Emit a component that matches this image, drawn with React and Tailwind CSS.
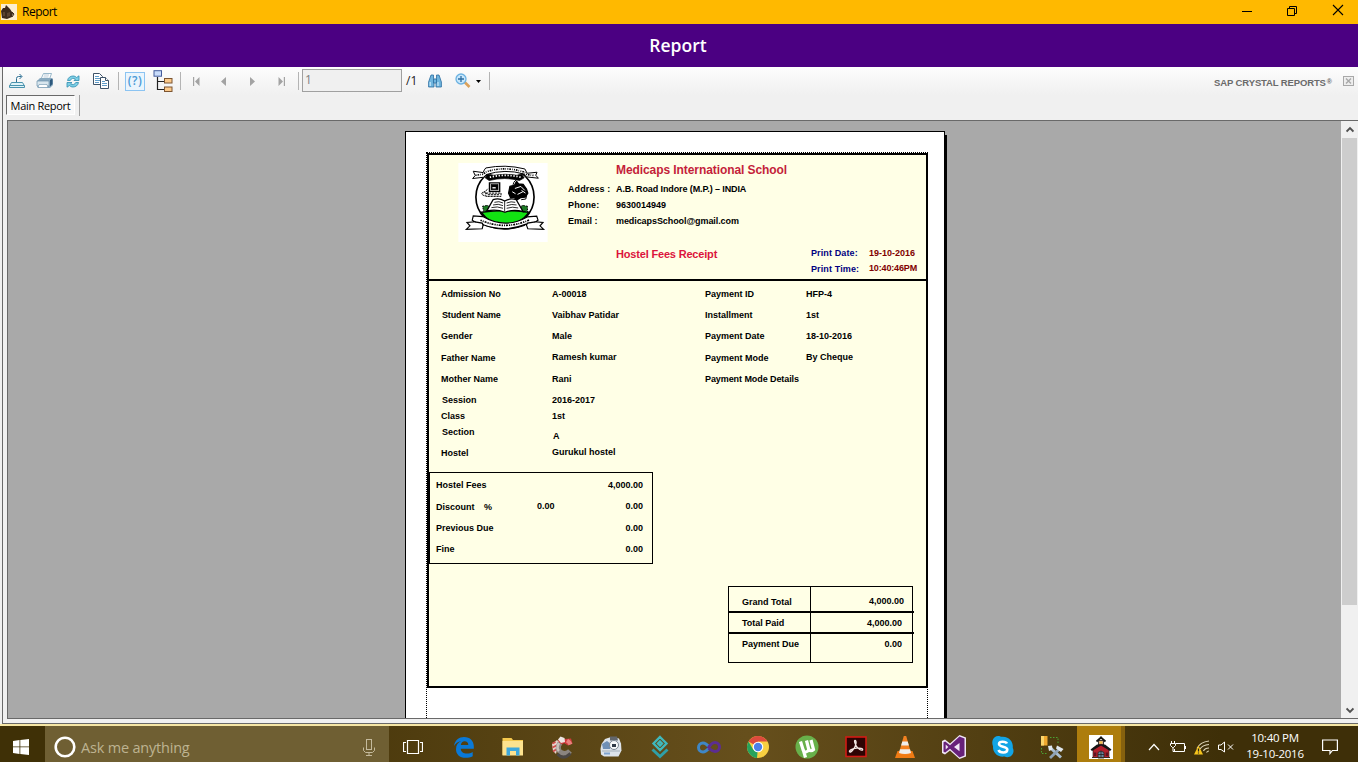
import React from "react";

const cell = "flex shrink-0 items-center justify-center h-full";

/* ---------- title bar ---------- */
function TitleBar() {
  return (
    <div className="flex h-6 shrink-0 items-center bg-[#ffb900] text-black">
      <svg className="ml-px h-4 w-4" viewBox="0 0 16 16">
        <rect width="16" height="16" fill="#fbeed2" />
        <path d="M0 7 L2 4 L4 4 L5 1 L9 5 L11 8 L12 9 L11 13 L6 15 L1 14 Z" fill="#3c2a1c" />
        <path d="M2 8h2v4h-2zM6 9l3-1v4l-3 1z" fill="#5b4330" />
        <path d="M11 8l2 2-2 3" stroke="#3c2a1c" fill="none" />
      </svg>
      <span className="ml-[5px] text-[12px] leading-6 tracking-[-0.5px]">Report</span>
      <div className="ml-auto flex h-full items-center">
        <svg className="mb-[3px] h-3 w-3 mr-[33px]" viewBox="0 0 12 12"><path d="M1 6.500h10" stroke="#000" /></svg>
        <svg className="mb-[3px] h-3 w-3 mr-[34px]" viewBox="0 0 12 12" fill="none" stroke="#000"><path d="M1.500 3.500h7v7h-7zM3.500 3.500v-2h7v7h-2" /></svg>
        <svg className="mb-[5px] h-3 w-3 mr-[14px]" viewBox="0 0 12 12"><path d="M1 1l10 10M11 1L1 11" stroke="#000" strokeWidth="1.1" /></svg>
      </div>
    </div>
  );
}

/* ---------- toolbar ---------- */
const Sep = () => <div className="h-[18px] w-px bg-[#b4b4b4]" />;

function Toolbar() {
  return (
    <div className="flex h-7 shrink-0 items-center bg-linear-to-b from-[#fdfdfd] to-[#f0f0f0]">
      <div className={`${cell} w-7`}>
        <svg className="h-4 w-[18px]" viewBox="0 0 18 16" fill="none" stroke="#4a93ad">
          <path d="M3.500 9.500h11l2 3.500v1.500h-15V13z" fill="#dff3f8" stroke="none" />
          <path d="M7 9.500H3.500L1.500 13v1.500h15V13l-2-3.500H11M1.500 12.500h15" />
          <path d="M6 9.500h6" />
          <path d="M8.500 9V5.500q0-2 2-2h3M11.500 1l2.500 2.500L11.500 6" stroke="#2c6f93" />
        </svg>
      </div>
      <div className={`${cell} w-7`}>
        <svg className="h-4 w-[18px]" viewBox="0 0 18 16">
          <path d="M5 6L7.500.5h8L13.500 6z" fill="#fff" stroke="#7fa6bd" strokeWidth=".8" />
          <path d="M8 2h5M7.500 4h5" stroke="#9bb6c8" strokeWidth=".7" />
          <path d="M1 8l3-3h12l1 2v5l-3 3H2l-1-2z" fill="#8aaac0" />
          <path d="M1 8h12v5H1z" fill="#d9e6ee" stroke="#6f93ac" strokeWidth=".7" />
          <path d="M3 11.500h8l1 3H2z" fill="#fff" stroke="#6f93ac" strokeWidth=".6" />
          <path d="M14 7l2.500-1.500V11L14 13.500z" fill="#2d587c" />
        </svg>
      </div>
      <div className={`${cell} w-[27px]`}>
        <svg className="h-[13px] w-[14px]" viewBox="0 0 14 13" fill="#7fd0e6" stroke="#2f8db0" strokeWidth=".8">
          <path d="M1.500 5.500C2 2.500 4.500 1 7 1c1.500 0 2.700.6 3.600 1.500L13 .8V5.500H8l1.400-1.400C7.700 2.800 5 3.200 4.300 5.500z" />
          <path d="M12.500 7.500C12 10.500 9.500 12 7 12c-1.500 0-2.700-.6-3.600-1.500L1 12.200V7.500h5L4.600 8.900C6.300 10.200 9 9.800 9.700 7.500z" />
        </svg>
      </div>
      <div className={`${cell} w-[30px]`}>
        <svg className="h-[18px] w-[18px]" viewBox="0 0 18 18" fill="#fff" stroke="#3e5368">
          <path d="M1.500 1.500h6l3 3v8h-9z" />
          <path d="M3 4.500h4M3 6.500h5M3 8.500h5M3 10.500h4" stroke="#5f9cc9" />
          <path d="M8.500 5.500h5l3 3v8h-8z" />
          <path d="M13.500 5.500v3h3" />
          <path d="M10 9.500h3M10 11.500h5M10 13.500h5" stroke="#5f9cc9" />
        </svg>
      </div>
      <div className={`${cell} w-[5px]`}><Sep /></div>
      <div className={`${cell} w-7`}>
        <div className="flex h-[19px] w-5 items-center justify-center border border-[#8cc4f2] bg-[#eaf5fd]">
          <span className="text-[12px] leading-none font-semibold tracking-[0.4px] text-[#4a9ad6]">(?)</span>
        </div>
      </div>
      <div className={`${cell} w-7`}>
        <svg className="h-[22px] w-5" viewBox="0 0 20 22" fill="none">
          <path d="M4.500 7v12.500h7M4.500 11.500h7" stroke="#222" strokeWidth="1.200" />
          <rect x="1" y=".7" width="7.500" height="5.500" fill="#c9dcfa" stroke="#445c9c" />
          <rect x="11.500" y="8.500" width="7.500" height="4.500" fill="#fbc98a" stroke="#7c5430" />
          <rect x="11.500" y="17" width="7.500" height="4.500" fill="#fbc98a" stroke="#7c5430" />
        </svg>
      </div>
      <div className={`${cell} w-1.5`}><Sep /></div>
      <div className={`${cell} w-[26px]`}>
        <svg className="h-[9px] w-[7px]" viewBox="0 0 7 9" fill="#a3a3a3"><path d="M0 0h1.200v9H0zM6.500 0v9L2 4.500z" /></svg>
      </div>
      <div className={`${cell} w-[28px]`}>
        <svg className="h-[9px] w-[5px]" viewBox="0 0 5 9" fill="#a3a3a3"><path d="M5 0v9L0 4.500z" /></svg>
      </div>
      <div className={`${cell} w-[31px]`}>
        <svg className="h-[9px] w-[5px]" viewBox="0 0 5 9" fill="#a3a3a3"><path d="M0 0v9l5-4.500z" /></svg>
      </div>
      <div className={`${cell} w-[26px]`}>
        <svg className="h-[9px] w-[7px]" viewBox="0 0 7 9" fill="#a3a3a3"><path d="M5.800 0H7v9H5.800zM.5 0v9L5 4.500z" /></svg>
      </div>
      <div className={`${cell} w-2`}><Sep /></div>
      <div className="mb-px flex h-[23px] w-[100px] shrink-0 items-center border border-[#a0a0a0] bg-[#f0f0f0] pb-px pl-[2px] text-[12px] text-[#808080]">1</div>
      <span className="w-[21px] shrink-0 pl-1 text-[12px] leading-none text-[#222]">/1</span>
      <div className={`${cell} w-6`}>
        <svg className="h-[14px] w-[14px]" viewBox="0 0 14 14" fill="#6fb5de" stroke="#2b6c9f" strokeWidth=".8">
          <path d="M3 1h2.500v3L6 6v7H.6V8z" />
          <path d="M11 1H8.500v3L8 6v7h5.400V8z" />
          <path d="M5.500 5h3v4h-3z" />
          <path d="M2.200 8v4M10 8v4" stroke="#c7e8fa" strokeWidth="1.200" />
        </svg>
      </div>
      <div className={`${cell} w-[31px] pb-0.5`}>
        <svg className="h-[15px] w-4" viewBox="0 0 16 15">
          <path d="M9.500 9l5 5" stroke="#dba25c" strokeWidth="2.600" />
          <circle cx="6" cy="6" r="5" fill="#c8e7fb" stroke="#6cb2e2" strokeWidth="1.300" />
          <path d="M3 6h6M6 3v6" stroke="#2d6ea3" strokeWidth="1.300" />
        </svg>
      </div>
      <svg className="-ml-0.5 h-[3px] w-[5px]" viewBox="0 0 5 3"><path d="M0 0h5L2.500 3z" /></svg>
      <div className="ml-2"><Sep /></div>
      <div className="ml-auto flex items-center">
        <span className="mt-[3px] font-['Liberation_Sans',Arial,sans-serif] text-[9.500px] leading-none font-bold tracking-[-0.13px] text-[#6a6a6a]">SAP CRYSTAL REPORTS</span>
        <span className="mr-[11px] ml-px font-['Liberation_Sans',Arial,sans-serif] text-[7px] leading-none font-bold text-[#666]">®</span>
        <svg className="mr-1 h-[11px] w-[11px]" viewBox="0 0 11 11" fill="none" stroke="#a8a8a8">
          <rect x=".5" y=".5" width="10" height="9" fill="#eee" />
          <path d="M3 2.500l5 5M8 2.500l-5 5" strokeWidth="1.400" />
        </svg>
      </div>
    </div>
  );
}

function Tabs() {
  return (
    <div className="flex h-[25px] shrink-0 items-start bg-[#f0f0f0] pl-0.5">
      <div className="ml-px flex h-5 w-[69px] items-center justify-center border border-t-[#696969] border-r-white border-b-white border-l-[#696969] bg-[#f8f8f8] pt-0.5 text-[11px] tracking-[-0.3px] whitespace-nowrap text-black">
        Main Report
      </div>
      <div className="ml-1 h-[21px] w-px bg-[#a0a0a0]" />
    </div>
  );
}

/* ---------- report page ---------- */
function Emblem() {
  return (
    <svg className="h-[79px] w-[90px]" viewBox="159 113 270 239" fill="none" stroke="#000" strokeWidth="4">
      <rect x="159" y="113" width="270" height="239" fill="#fff" stroke="none" />
      <circle cx="300" cy="216" r="88" fill="#fff" strokeWidth="5" />
      <path d="M228 262Q300 252 373 262Q345 300 300 300Q255 300 228 262z" fill="#12e312" stroke="#000" />
      <path d="M236 254h130" strokeWidth="5" />
      <path d="M243 286Q300 312 358 286" strokeWidth="3" />
      <path d="M232 244l16-3 10 16-22 3zM368 244l-16-3-8 16 24 4z" fill="#1d7a24" strokeWidth="3" strokeDasharray="5 3" />
      {/* open book */}
      <path d="M245 258L264 224Q282 218 299 228Q316 218 334 224L355 260Q325 252 300 262Q275 252 245 258z" fill="#fff" />
      <path d="M299 228v32M268 232q14-5 26 2M264 240q16-5 30 2M259 248q18-5 35 2M305 234q14-6 26-2M305 242q16-6 30-2M305 250q18-6 35-1" strokeWidth="2.500" />
      {/* computer */}
      <path d="M253 173h31v26h-31z" fill="#fff" strokeWidth="4" />
      <rect x="258" y="178" width="21" height="16" fill="#000" strokeWidth="2" />
      <path d="M262 188h10" stroke="#fff" strokeWidth="4" />
      <path d="M242 204h46v10h-46zM238 212q-12-4-6-10 8-5 12 4M235 203l14-12M248 209h34" strokeWidth="3" strokeDasharray="7 2" />
      {/* globe and hand */}
      <path d="M315 184l14-4 6-12 6 8 14 2 10 14 4 12-8 12-14 2-10 6-12-8-8 2-6-14z" fill="#000" />
      <path d="M330 190l18-6 12 12M338 208l16-8M324 180q2-14 14-16M350 196l12 8M322 200l10 6" stroke="#fff" strokeWidth="3" />
      <path d="M325 184q-2-14 10-20M352 210l14-2-3 14-14 2" strokeWidth="3" />
      {/* upper ribbon */}
      <path d="M240 158l8-12 18 4q34-6 70 0l14-4 8 12-14 8q-44-12-92 0z" fill="#000" strokeWidth="2" />
      <path d="M254 156Q300 145 348 156" stroke="#fff" strokeWidth="5" strokeDasharray="4 5" />
      <path d="M204 138l30 4q3-9 8-14Q300 116 360 131l7 13 30-3-4 9 8 9-36-4-8-9Q300 130 243 148l-7 8-34 4 8-9z" fill="#fff" strokeWidth="3" />
      <path d="M211 150l23-3 10-8Q300 122 357 140l9 8 23 3" strokeWidth="5" strokeDasharray="3 3 5 3 2 4" />
      {/* lower ribbon */}
      <path d="M234 280q65 40 132 0l-8 22q-58 22-116 0z" fill="#000" />
      <path d="M204 273l-3 13 8 5-24 2 9 10-11 11 48-2 3-12Q300 324 364 298l5 14 48 2-11-11 9-10-23-2 8-5-4-12-29 2Q300 314 233 275z" fill="#fff" strokeWidth="3.500" />
      <path d="M209 291l22 4 4 7M392 291l-24 4-4 7" strokeWidth="4" />
      <path d="M226 286Q300 318 374 285" strokeWidth="5" strokeDasharray="4 3 3 3 6 3" />
    </svg>
  );
}

/* A column of fields; every entry carries the distance to the next one. */
function Column({ items, className }) {
  return (
    <div className={`flex flex-col ${className}`}>
      {items.map(([text, h, t]) => (
        <div key={text} className={`${h} ${t || ""} shrink-0`}>{text}</div>
      ))}
    </div>
  );
}

const leftLabels = [
  ["Admission No", "h-[21px]", "tracking-[-0.08px]"], ["Student Name", "h-[21px]", "pl-px tracking-[-0.15px]"], ["Gender", "h-[22px]"],
  ["Father Name", "h-[21px]"], ["Mother Name", "h-[21px]"], ["Session", "h-4", "pl-px"],
  ["Class", "h-4"], ["Section", "h-[21px]", "pl-px"], ["Hostel", "h-3"],
];
const leftValues = [
  ["A-00018", "h-[21px]"], ["Vaibhav Patidar", "h-[21px]"], ["Male", "h-[21px]"],
  ["Ramesh kumar", "h-[22px]"], ["Rani", "h-[21px]"], ["2016-2017", "h-4"],
  ["1st", "h-5"], ["A", "h-4", "pl-px"], ["Gurukul hostel", "h-3"],
];
const rightLabels = [
  ["Payment ID", "h-[21px]"], ["Installment", "h-[21px]"], ["Payment Date", "h-[22px]"],
  ["Payment Mode", "h-[21px]"], ["Payment Mode Details", "h-3", "tracking-[-0.08px]"],
];
const rightValues = [["HFP-4", "h-[21px]"], ["1st", "h-[21px]"], ["18-10-2016", "h-[21px]"], ["By Cheque", "h-3"]];

function ReportHeader() {
  return (
    <div className="flex h-[126px] shrink-0 border-b-2 border-black">
      <div className="mt-2 ml-[29px] w-[110px] shrink-0"><Emblem /></div>
      <div className="w-[243px] shrink-0">
        <div className="mt-2 ml-12 text-[12px] leading-[14px] tracking-[-0.08px] whitespace-nowrap text-[#c41e3a]">Medicaps International School</div>
        <div className="mt-[6px] flex h-4"><span className="w-12 tracking-[0.1px]">Address :</span><span className="tracking-[-0.1px] whitespace-nowrap">A.B. Road Indore (M.P.) – INDIA</span></div>
        <div className="flex h-4"><span className="w-12 tracking-[0.15px]">Phone:</span><span>9630014949</span></div>
        <div className="flex h-4"><span className="w-12">Email :</span><span className="tracking-[-0.08px]">medicapsSchool@gmail.com</span></div>
        <div className="mt-4 ml-12 text-[11px] leading-[14px] tracking-[-0.18px] whitespace-nowrap text-[#dc143c]">Hostel Fees Receipt</div>
      </div>
      <div className="mt-[92px] text-[#000080]">
        <div className="flex h-4"><span className="w-[58px] tracking-[0.12px]">Print Date:</span><span className="text-[#800000]">19-10-2016</span></div>
        <div className="flex h-4"><span className="w-[58px] tracking-[0.12px]">Print Time:</span><span className="-mt-px tracking-[-0.15px] text-[#800000]">10:40:46PM</span></div>
      </div>
    </div>
  );
}

function FeesBox() {
  return (
    <div className="mt-[14px] h-[92px] w-[224px] shrink-0 border border-black pt-1.5 pr-[9px] pl-1.5">
      <div className="flex h-[21px] justify-between"><span>Hostel Fees</span><span>4,000.00</span></div>
      <div className="flex h-[22px]">
        <span className="mt-px w-12">Discount</span><span className="mt-px w-[53px]">%</span><span>0.00</span>
        <span className="ml-auto">0.00</span>
      </div>
      <div className="flex h-[21px] justify-between"><span>Previous Due</span><span>0.00</span></div>
      <div className="flex h-[21px] justify-between"><span>Fine</span><span>0.00</span></div>
    </div>
  );
}

function TotalsBox() {
  return (
    <div className="mt-[22px] ml-[299px] w-[185px] shrink-0 border border-black">
      <div className="flex h-[26px] w-[185px] border-b-2 border-black">
        <span className="w-[82px] border-r border-black pt-[9px] pl-[13px]">Grand Total</span>
        <span className="ml-auto pt-2 pr-[10px]">4,000.00</span>
      </div>
      <div className="flex h-[21px] w-[185px] border-b-2 border-black">
        <span className="w-[82px] border-r border-black pt-1 pl-[13px]">Total Paid</span>
        <span className="ml-auto pt-1 pr-3">4,000.00</span>
      </div>
      <div className="flex h-7 w-[185px]">
        <span className="w-[82px] border-r border-black pt-1 pl-[13px]">Payment Due</span>
        <span className="ml-auto pt-1 pr-3">0.00</span>
      </div>
    </div>
  );
}

function ReportPage() {
  return (
    <div className="mt-[10px] ml-[397px] h-[700px] w-[540px] shrink-0 border border-black bg-white pt-5 pl-5 shadow-[2px_4px_0_#000]">
      <div className="h-[700px] w-[502px] border border-dotted border-black font-['Liberation_Sans',Arial,sans-serif] text-[9px] leading-3 font-bold text-black">
        <div className="flex h-[535px] w-[501px] flex-col border-2 border-black bg-[#ffffe6]">
          <ReportHeader />
          <div className="flex h-[177px] shrink-0 pt-[7px] pl-3">
            <Column items={leftLabels} className="w-[111px]" />
            <Column items={leftValues} className="w-[153px]" />
            <Column items={rightLabels} className="w-[101px] whitespace-nowrap" />
            <Column items={rightValues} className="whitespace-nowrap" />
          </div>
          <FeesBox />
          <TotalsBox />
        </div>
      </div>
    </div>
  );
}

function Viewer() {
  return (
    <div className="ml-1 flex h-[599px] shrink-0 overflow-hidden border border-r-0 border-[#696969] bg-[#a9a9a9]">
      <div className="flex min-w-0 grow overflow-hidden"><ReportPage /></div>
      <div className="flex w-[17px] shrink-0 flex-col items-center bg-[#f0f0f0]">
        <div className="flex h-[17px] items-center">
          <svg className="h-2 w-2" viewBox="0 0 8 8" fill="none" stroke="#505050" strokeWidth="1.800"><path d="M.6 5.500L4 2l3.400 3.500" /></svg>
        </div>
        <div className="h-[467px] w-[15px] bg-[#cdcdcd]" />
        <div className="mt-auto flex h-[17px] items-center">
          <svg className="h-2 w-2" viewBox="0 0 8 8" fill="none" stroke="#505050" strokeWidth="1.800"><path d="M.6 2.500L4 6l3.400-3.500" /></svg>
        </div>
      </div>
    </div>
  );
}

/* ---------- taskbar ---------- */
const I = ({ children }) => <svg className="h-6 w-6" viewBox="0 0 24 24">{children}</svg>;

const apps = [
  <I key="edge">
    <path d="M2 11C3 4.800 7 2 12 2c6.300 0 9.800 4.300 9.800 9.300v2.400H8.700c.3 3.400 3.100 4.800 6.100 4.800 2.300 0 4.200-.6 5.900-1.600v4.300c-2 1.200-4.500 1.600-7 1.600-6.200 0-9.700-3.700-9.700-8.600 0-4 2.200-6.700 5.300-8.100C6 6.600 3.500 8.500 2 11zM8.800 10h7.500C16.300 7.500 14.900 6.300 12.600 6.300 10.500 6.300 9.200 7.700 8.800 10z" fill="#0a79d7" />
  </I>,
  <I key="explorer">
    <path d="M1.500 3h9l1.500 2h10v15h-20.500z" fill="#f5c94e" />
    <path d="M1.500 6h20.500v14.500H1.500z" fill="#fde38f" />
    <path d="M5.500 12.500h13v8H15v-4.500H9v4.500H5.500z" fill="#3ea8dc" />
  </I>,
  <I key="cleaner">
    <path d="M8 5l3-3 4 2 6-.5 1.500 5-4.500 2-4-2.500-5 4z" fill="#d0393c" />
    <path d="M8 4.500l2.500-3 4 1.500.5 4-4 1z" fill="#ece6e2" />
    <path d="M2 9l5-4 2 2-3 12-3-3z" fill="#e9d0cb" />
    <path d="M2.500 8.500l3-1.500M2.500 12.500l4-2M3 16.500l3-2" stroke="#cf4a48" strokeWidth="1.600" />
    <path d="M17 5.500q2.500 1.500 3.500 4" fill="none" stroke="#e8807c" strokeWidth="4" />
    <path d="M10 8q-4 6 1 9.500 5 3 9-1.500" fill="none" stroke="#8a847f" strokeWidth="5" />
    <path d="M7.500 19q4 4.500 9 2.500l4-3" fill="none" stroke="#4b4744" strokeWidth="3" />
    <path d="M9 8q-3 5 0 8" fill="none" stroke="#c9c2bc" strokeWidth="2.500" />
  </I>,
  <I key="machine">
    <path d="M1.500 14l1-5L6 4l6-2 8 1.500 2 5 .5 7-3 6H5l-3-2z" fill="#dde3ea" />
    <path d="M11 1.500h7l1 4h-8z" fill="#62666c" />
    <path d="M3 9l5-3 4 3-1 5H4z" fill="#6f8fb5" />
    <circle cx="15" cy="10" r="4.500" fill="#f7f9fb" stroke="#7b8794" />
    <path d="M3 16h18" stroke="#a3afba" /><path d="M5 18.500h6" stroke="#7fa3cf" strokeWidth="2" />
    <path d="M13 9h4v3h-4z" fill="#2f3a48" />
  </I>,
  <I key="blocks">
    <path d="M12 2l6.500 6.500L12 15 5.500 8.500zM12 6.500l2 2-2 2-2-2z" fill="none" stroke="#3fb9bd" strokeWidth="2.300" />
    <path d="M4.500 14.500l7.500 7 7.500-7" fill="none" stroke="#2fa0a8" strokeWidth="3" />
  </I>,
  <I key="infinity">
    <path d="M12.500 12.500c-2.500 3-4 4.500-6.500 4.500s-4.500-2-4.500-4.500S3.500 8 6 8s4.500 2 6.500 4.500" fill="none" stroke="#3f87c6" strokeWidth="3" />
    <path d="M11 13.500c2-3.500 4.200-6 7-6 2.500 0 4.500 2 4.500 4.500S20.500 16.500 18 16.500s-4.500-2-6.500-3.500" fill="none" stroke="#5c2d91" strokeWidth="3" />
  </I>,
  <I key="chrome">
    <circle cx="12" cy="12" r="11" fill="#f7cf40" />
    <path d="M12 12L2.500 6.500A11 11 0 0 1 21.500 6.500H12z" fill="#dc4a3d" />
    <path d="M12 12l-1 11A11 11 0 0 1 2.500 6.500L7.300 14.700z" fill="#27a25c" />
    <circle cx="12" cy="12" r="5.300" fill="#fff" />
    <circle cx="12" cy="12" r="4.200" fill="#4a80e8" />
  </I>,
  <I key="torrent">
    <circle cx="12" cy="12" r="11.500" fill="#68b04a" />
    <path d="M5.500 6.500l2.800 9c.8 2.300 4.500 2 5.500-1L11.500 5.500M13.800 14c1 2.500 3.200 2 4.700.5L16 5M8.300 15l2.200 7.500" fill="none" stroke="#fff" strokeWidth="3.200" />
  </I>,
  <I key="reader">
    <rect x="2" y="2" width="20" height="19.500" fill="#2d0404" stroke="#d11b14" strokeWidth="1.600" />
    <path d="M11 5.500c2 0 1 5-1 8-2 3.200-4 4-4.500 3.200-.6-1.200 3-3 7-3.500s6.500.2 6.200 1.500c-.5 1.400-5-.6-6.700-4.200-1.200-2.500-2-5-1-5z" fill="none" stroke="#f5e8e4" strokeWidth="1.300" />
  </I>,
  <I key="player">
    <path d="M4.500 16h15l2.500 7H2z" fill="#ef7b14" />
    <path d="M10.800 1h2.400l5 17.500q-6.200 2.500-12.400 0z" fill="#f38120" />
    <path d="M9.300 6.500h5.400l1.200 4H8.100zM7 14.300h10l1 3.600q-6 2-12 0z" fill="#eee" />
  </I>,
  <I key="studio">
    <path d="M17.500 0L24 2.500v19L17.500 24 8 15.500 3 19.500 0 18V6l3-1.500L8 8.500z" fill="#f0e6f5" />
    <path d="M17.500 1.500L22.500 3.500v17l-5 2L8 13.700 3.200 17.600 1.500 16.700V7.300l1.700-.9L8 10.300zM17.500 8L12 12l5.500 4.200zM3.700 9.500v5L6.300 12z" fill="#67217a" fillRule="evenodd" />
  </I>,
  <I key="skype">
    <path d="M7 1c2 0 3 .8 4 .8 7-.5 11.500 5 10.800 11.200 1.500 3 .6 6-1.500 7.700-2 1.700-4.500 1.800-6.800.8C6.500 22.500 1.500 17.500 2 11.200 0 6 2.500 1.200 7 1z" fill="#12a5e6" />
    <path d="M16 8.500C15 6.500 8 5.500 8 9c0 3.500 8.300 1.800 8.300 5.500 0 4-7.500 3.700-8.800.5" fill="none" stroke="#fff" strokeWidth="2.600" />
  </I>,
  <I key="tools">
    <path d="M1 1h6.500v9.500H1z" fill="#f0a92f" /><path d="M1 1h3v9.500H1z" fill="#fbd56c" />
    <path d="M10 2.500h8v7M1.500 13v5.500h6" fill="none" stroke="#4aa334" strokeDasharray="1.500 1.500" />
    <path d="M10 12.500l11 10" stroke="#a9bed0" strokeWidth="3" /><path d="M20 13.500L10 23" stroke="#8fa3b5" strokeWidth="2.800" />
    <path d="M17 10.500l6.500 3.500-2.500 3-5-3.500zM8 11l4-.5.500 4-3.500 1.500z" fill="#dfe7ee" />
  </I>,
];

function School() {
  return (
    <svg className="h-6 w-6" viewBox="0 0 24 24">
      <rect width="24" height="24" fill="#fff" />
      <path d="M9.500 5.500h5V10h-5z" fill="#d9a87c" stroke="#111" strokeWidth=".8" />
      <path d="M7.500 6.500L12 2.500l4.500 4M12 1.500v2" stroke="#111" strokeWidth="1.800" fill="none" />
      <path d="M4 13.500l8-4.500 8 4.500v9H4z" fill="#b3202c" stroke="#111" strokeWidth=".6" />
      <path d="M1.500 14.500L8 9.500h8l6.500 5-1.500 1.500L12 10.500 3 16z" fill="#151515" />
      <circle cx="12" cy="7.500" r="1.200" fill="#f2c14c" />
      <path d="M9 23v-5.500q3-3 6 0V23z" fill="#6d86a0" stroke="#222" strokeWidth=".8" />
      <path d="M5 17.500h2.300V21H5zM16.700 17.500H19V21h-2.300z" fill="#5c1420" />
      <path d="M12 16v7M9 19.500h6" stroke="#222" strokeWidth=".8" />
      <path d="M3 22.500h18" stroke="#3b2a20" />
    </svg>
  );
}

function Taskbar() {
  return (
    <div className="flex h-9 shrink-0 bg-linear-to-r from-[#4b390c] from-25% via-[#664f1c] via-55% to-[#3e2f08] to-90%">
      <div className={`${cell} w-[45px] bg-[#3f3006] pt-1.5 pr-[3px]`}>
        <svg className="h-4 w-4" viewBox="0 0 16 16" fill="#fff"><path d="M0 2l6.500-1v6.500H0zM7.300.9L16 0v7.500H7.300zM0 8.300h6.500V15L0 14zM7.300 8.300H16V16l-8.700-1z" /></svg>
      </div>
      <div className="flex h-full w-[344px] shrink-0 items-center bg-[#6f5f33] pt-1.5">
        <svg className="ml-2 h-6 w-6" viewBox="0 0 24 24"><circle cx="12" cy="12" r="9.300" fill="none" stroke="#fff" strokeWidth="2.600" /></svg>
        <span className="mt-px ml-1 text-[14.500px] leading-6 tracking-[-0.2px] text-[#bdb391]">Ask me anything</span>
        <svg className="mr-[14px] ml-auto h-[17px] w-3" viewBox="0 0 12 17" fill="none" stroke="#c4ba9d">
          <rect x="3.500" y=".5" width="5" height="10" /><path d="M.5 8.500v3l2 2h7l2-2v-3M6 13.500v3M3 16.500h6" />
        </svg>
      </div>
      <div className={`${cell} w-[50px] pt-1.5 pr-0.5`}>
        <svg className="h-[14px] w-5" viewBox="0 0 20 14" fill="none" stroke="#fff"><path d="M4.500.5h11v13h-11zM3 2.500H.5v9H3M17 2.500h2.500v9H17" strokeWidth="1.200" /></svg>
      </div>
      {apps.map((icon) => <div key={icon.key} className={`${cell} w-[49px] pt-1.5`}>{icon}</div>)}
      <div className={`${cell} ml-px w-11 bg-[#ad7d0d] pt-1.5 pl-1`}><School /></div>
      <div className="h-full w-1 bg-[#86610e]" />
      <div className="ml-auto flex h-full items-center pt-1.5">
        <svg className="mr-[10px] h-3 w-3" viewBox="0 0 12 12" fill="none" stroke="#fff" strokeWidth="1.200"><path d="M1 9l5-5.500L11 9" /></svg>
        <svg className="mr-2 h-3 w-4" viewBox="0 0 16 12" fill="none" stroke="#fff"><path d="M6 2.500h8.500v8H4.500V8M15.500 5v3M1.500 0v3M4.500 0v3M.5 2.500h5v2l-2 2h-1l-2-2zM3 6.500v4h2" /></svg>
        <svg className="mr-2 h-4 w-4" viewBox="0 0 16 16" fill="none" stroke="#fff" strokeWidth="1.200">
          <path d="M3 9.500Q6 3 15 2M6 10Q8.500 6 15 5.500M9.500 12q1.500-3 5.500-3M12.500 13.500q1-1.500 2.500-1.500" stroke="#ded6bb" />
          <path d="M4.500 6.500L9 15.500H0z" fill="#f7c51c" stroke="none" /><path d="M4.500 9.500v3M4.500 13.500v1" stroke="#222" />
        </svg>
        <svg className="mr-[10px] h-3 w-4" viewBox="0 0 16 12" fill="none" stroke="#fff"><path d="M.5 4h2.500l3.500-3v10L3 8.500H.5zM10 3.500l5 5M15 3.500l-5 5" /></svg>
        <div className="-mt-0.5 w-[62px] text-center text-[11.500px] leading-4 tracking-[-0.25px] whitespace-nowrap text-white">
          <div>10:40 PM</div><div>19-10-2016</div>
        </div>
        <svg className="mr-5 ml-4 h-4 w-4" viewBox="0 0 16 16" fill="none" stroke="#fff" strokeWidth="1.200"><path d="M.6 1h14.800v10.500h-5L8 14.500v-3H.6z" /></svg>
      </div>
    </div>
  );
}

export default function App() {
  return (
    <div className="flex h-[762px] w-[1358px] flex-col overflow-hidden bg-[#f0f0f0] font-['Open_Sans','Noto_Sans',sans-serif]">
      <TitleBar />
      <div className="flex h-[43px] shrink-0 items-center justify-center bg-[#4b0082] pt-px text-[17.500px] leading-none font-semibold tracking-[0.05px] text-white">
        <span className="-ml-0.5">Report</span>
      </div>
      <div className="ml-0.5 flex h-[657px] shrink-0 flex-col border-b border-l border-[#696969]">
        <Toolbar />
        <Tabs />
        <Viewer />
      </div>
      <div className="h-0.5 shrink-0 bg-[#f6e6a4]" />
      <Taskbar />
    </div>
  );
}
